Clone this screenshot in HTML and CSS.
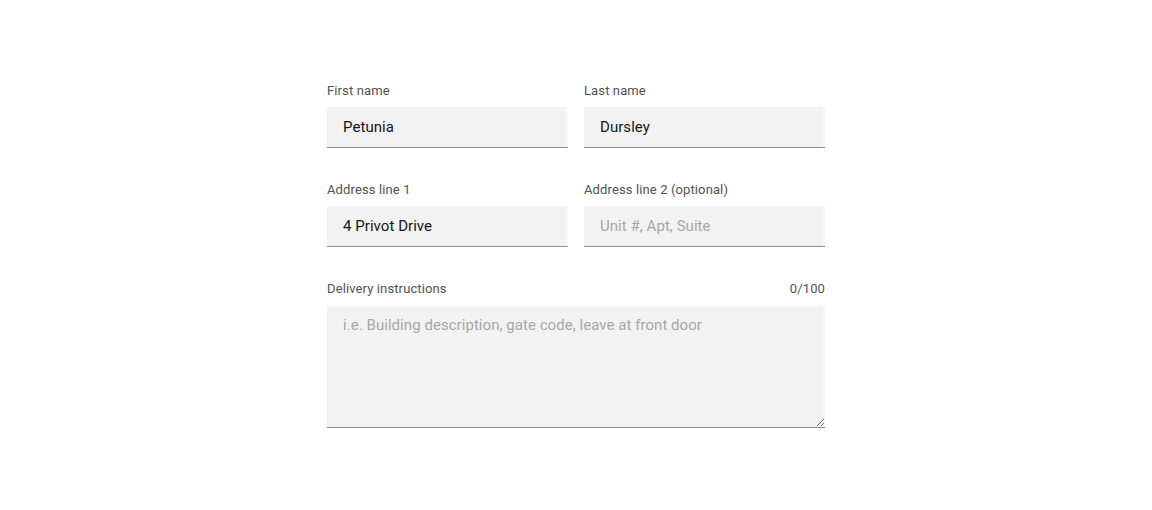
FILE: index.html
```html
<!DOCTYPE html>
<html lang="en">
<head>
<meta charset="utf-8">
<title>Delivery address</title>
<link rel="stylesheet" href="styles.css">
</head>
<body>
<form class="form">
  <div class="row">
    <div class="field">
      <label class="label" for="fn">First name</label>
      <input class="input" id="fn" type="text" value="Petunia">
    </div>
    <div class="field">
      <label class="label" for="ln">Last name</label>
      <input class="input" id="ln" type="text" value="Dursley">
    </div>
  </div>
  <div class="row">
    <div class="field">
      <label class="label" for="a1">Address line 1</label>
      <input class="input" id="a1" type="text" value="4 Privot Drive">
    </div>
    <div class="field">
      <label class="label" for="a2">Address line 2 (optional)</label>
      <input class="input" id="a2" type="text" placeholder="Unit #, Apt, Suite">
    </div>
  </div>
  <div class="field">
    <div class="label-row">
      <label class="label" for="di">Delivery instructions</label>
      <span class="label counter">0/100</span>
    </div>
    <textarea class="textarea" id="di" maxlength="100" placeholder="i.e. Building description, gate code, leave at front door"></textarea>
  </div>
</form>
</body>
</html>
```

FILE: styles.css
```css
* { box-sizing: border-box; }
html, body { margin: 0; padding: 0; background: #ffffff; }
body {
  font-family: Roboto, "Liberation Sans", sans-serif;
  color: #161616;
}
.form {
  width: 498px;
  margin: 82px auto 0;
  display: flex;
  flex-direction: column;
  gap: 33px;
}
.row {
  display: grid;
  grid-template-columns: minmax(0, 1fr) minmax(0, 1fr);
  gap: 16px;
}
.field {
  display: flex;
  flex-direction: column;
  min-width: 0;
}
.label-row {
  display: flex;
  justify-content: space-between;
}
.label {
  font-size: 13px;
  line-height: 18px;
  letter-spacing: 0.12px;
  color: #525252;
  margin-bottom: 7px;
}
.input, .textarea {
  width: 100%;
  min-width: 0;
  font-family: inherit;
  font-size: 15px;
  letter-spacing: 0.05px;
  color: #161616;
  background: #f2f2f2;
  border: none;
  border-bottom: 1px solid #8d8d8d;
  border-radius: 0;
  outline: none;
  padding: 0 16px;
  margin: 0;
  box-shadow: inset -2px 0 0 #f8f8f8;
}
.input {
  height: 41px;
  line-height: 24px;
}
.textarea {
  display: block;
  height: 123px;
  padding: 8px 16px;
  line-height: 24px;
  resize: vertical;
  box-shadow: inset -2px 2px 0 #f8f8f8;
}
.input::placeholder, .textarea::placeholder {
  color: #a8a8a8;
  opacity: 1;
}
```
